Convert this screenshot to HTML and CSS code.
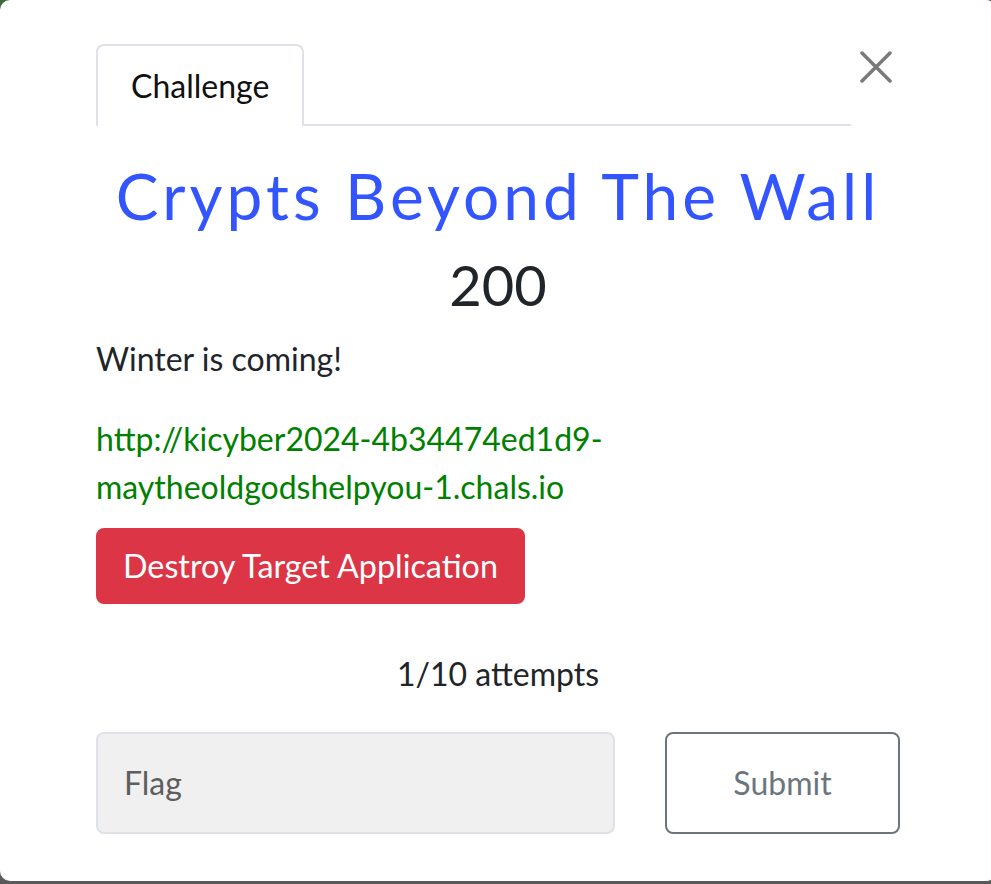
FILE: index.html
```html
<!DOCTYPE html>
<html lang="en">
<head>
<meta charset="utf-8">
<title>Challenge</title>
<link rel="stylesheet" href="styles.css">
</head>
<body>
<div class="modal">
  <div class="modal-body">
    <div class="header">
      <ul class="tabs">
        <li class="tab">Challenge</li>
      </ul>
      <button class="close" aria-label="Close">
        <svg width="32" height="32" viewBox="0 0 32 32"><path d="M2 2 L30 30 M30 2 L2 30" stroke="#7a7a7a" stroke-width="3.5" stroke-linecap="round" fill="none"/></svg>
      </button>
    </div>
    <h2 class="name">Crypts Beyond The Wall</h2>
    <h3 class="value">200</h3>
    <p class="desc">Winter is coming!</p>
    <p class="link"><a href="#">http://kicyber2024-4b34474ed1d9-maytheoldgodshelpyou-1.chals.io</a></p>
    <button class="destroy">Destroy Target Application</button>
    <p class="attempts">1/10 attempts</p>
    <div class="form-row">
      <input class="flag" type="text" placeholder="Flag">
      <button class="submit">Submit</button>
    </div>
  </div>
</div>
</body>
</html>
```

FILE: styles.css
```css
html, body {
  margin: 0;
  padding: 0;
}
body {
  width: 991px;
  height: 884px;
  overflow: hidden;
  background: linear-gradient(to bottom, #3b6a3b 0, #3b6a3b 30px, #5a5a5a 30px);
  font-family: "Lato", "Liberation Sans", sans-serif;
  color: #212529;
}
.modal {
  width: 996px;
  height: 881px;
  background: #fff;
  border-radius: 10px;
  box-sizing: border-box;
}
.modal-body {
  width: 804px;
  margin-left: 96px;
  padding-top: 44px;
}
.header {
  display: flex;
  align-items: flex-start;
}
.tabs {
  flex: 1;
  list-style: none;
  margin: 0;
  padding: 0;
  display: flex;
  border-bottom: 2px solid #dee2e6;
}
.tab {
  background: #fff;
  border: 2px solid #dee2e6;
  border-bottom: none;
  border-radius: 8px 8px 0 0;
  padding: 16px 33px;
  font-size: 32px;
  line-height: 47px;
  color: #111;
  margin-bottom: -2px;
  height: 48px;
}
.close {
  width: 49px;
  height: 32px;
  margin-top: 7px;
  padding: 0;
  border: 0;
  background: none;
  display: flex;
  align-items: center;
  justify-content: center;
}
.name {
  margin: 0 0 16px;
  padding-top: 32px;
  text-align: center;
  font-size: 64px;
  font-weight: 400;
  line-height: 1.2;
  letter-spacing: 4px;
  color: #3355ff;
}
.value {
  margin: 0 0 17px;
  text-align: center;
  font-size: 56px;
  font-weight: 400;
  line-height: 1.2;
}
.desc {
  margin: 0 0 32px;
  font-size: 32px;
  line-height: 48px;
}
.link {
  margin: 0 0 17px;
  font-size: 32px;
  line-height: 48px;
  width: 560px;
}
.link a {
  color: #008000;
  text-decoration: none;
}
.destroy {
  display: block;
  padding: 12px 25px;
  border: 2px solid #dc3545;
  background: #dc3545;
  color: #fff;
  font-family: inherit;
  font-size: 32.3px;
  line-height: 48px;
  border-radius: 8px;
}
.attempts {
  margin: 46px 0 34px;
  text-align: center;
  font-size: 32px;
  line-height: 48px;
}
.form-row {
  display: flex;
  gap: 50px;
}
.flag {
  width: 519px;
  height: 102px;
  box-sizing: border-box;
  background: #f0f0f0;
  border: 2px solid #dee2e6;
  border-radius: 8px;
  padding: 0 26px;
  font-family: inherit;
  font-size: 32px;
  color: #495057;
}
.flag::placeholder {
  color: #5e5e5e;
}
.submit {
  width: 235px;
  height: 102px;
  box-sizing: border-box;
  background: #fff;
  border: 2px solid #6c757d;
  border-radius: 8px;
  color: #6c757d;
  font-family: inherit;
  font-size: 32px;
}
```
